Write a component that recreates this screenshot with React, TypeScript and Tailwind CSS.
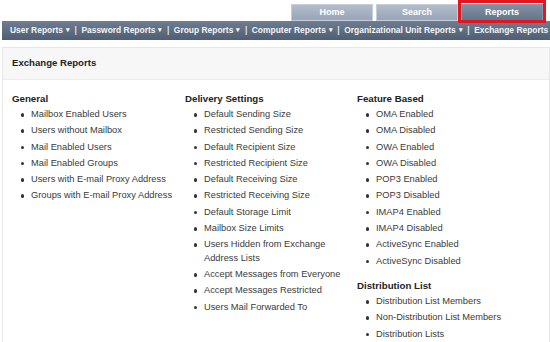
import React from 'react';

const navItems = [
  "User Reports",
  "Password Reports",
  "Group Reports",
  "Computer Reports",
  "Organizational Unit Reports",
  "Exchange Reports",
];

const columns = [
  [
    {
      title: "General",
      items: [
        "Mailbox Enabled Users",
        "Users without Mailbox",
        "Mail Enabled Users",
        "Mail Enabled Groups",
        "Users with E-mail Proxy Address",
        "Groups with E-mail Proxy Address",
      ],
    },
  ],
  [
    {
      title: "Delivery Settings",
      items: [
        "Default Sending Size",
        "Restricted Sending Size",
        "Default Recipient Size",
        "Restricted Recipient Size",
        "Default Receiving Size",
        "Restricted Receiving Size",
        "Default Storage Limit",
        "Mailbox Size Limits",
        "Users Hidden from Exchange Address Lists",
        "Accept Messages from Everyone",
        "Accept Messages Restricted",
        "Users Mail Forwarded To",
      ],
    },
  ],
  [
    {
      title: "Feature Based",
      items: [
        "OMA Enabled",
        "OMA Disabled",
        "OWA Enabled",
        "OWA Disabled",
        "POP3 Enabled",
        "POP3 Disabled",
        "IMAP4 Enabled",
        "IMAP4 Disabled",
        "ActiveSync Enabled",
        "ActiveSync Disabled",
      ],
    },
    {
      title: "Distribution List",
      items: [
        "Distribution List Members",
        "Non-Distribution List Members",
        "Distribution Lists",
      ],
    },
  ],
];

function Tab({ label, active }: { label: string; active?: boolean }) {
  return (
    <div className="relative">
      <div
        className={
          active
            ? "w-[82px] h-[17px] flex items-center justify-center text-[9px] font-bold text-white bg-gradient-to-b from-[#8190a4] to-[#65758b] border border-[#8a98ab]"
            : "w-[82px] h-[17px] flex items-center justify-center text-[9px] font-bold text-white bg-gradient-to-b from-[#b3bdcb] to-[#98a5b8] border border-[#c6ced9]"
        }
      >
        {label}
      </div>
      {active && (
        <div className="absolute left-[-3px] top-[-4px] w-[88px] h-[23px] border-[3px] border-[#e3161f]" />
      )}
    </div>
  );
}

export default function App() {
  return (
    <div className="w-[550px] h-[342px] bg-white overflow-hidden font-['Liberation_Sans',Arial,sans-serif]">
      <div className="flex justify-end items-end gap-[3px] pr-[7px] h-[21px]">
        <Tab label="Home" />
        <Tab label="Search" />
        <Tab label="Reports" active />
      </div>

      <div className="ml-[2px] h-[19px] flex items-center pl-[8px] whitespace-nowrap overflow-hidden bg-gradient-to-b from-[#6e7d92] to-[#4f5e73] text-[8.45px] font-bold text-[#f2f4f7]">
        {navItems.map((item, i) => (
          <div key={i} className="flex items-center shrink-0">
            {i > 0 && <span className="mx-[4.5px] text-[#dfe3ea]">|</span>}
            <span>{item}</span>
            {i < navItems.length - 1 && <span className="ml-[3px] text-[7px]">▾</span>}
          </div>
        ))}
      </div>

      <div className="mt-[7px] ml-[2px] border border-[#e7e7e7] h-[300px]">
        <div className="h-[32px] flex items-center pl-[9px] bg-[#f7f7f7] border-b border-[#ededed] text-[9.6px] font-bold text-[#222]">
          Exchange Reports
        </div>
        <div className="grid grid-cols-[173px_172px_1fr] pl-[9px] pt-[12px]">
          {columns.map((groups, ci) => (
            <div key={ci} className="flex flex-col gap-[11px]">
              {groups.map((g) => (
                <div key={g.title}>
                  <div className="text-[9.7px] leading-[13px] font-bold text-[#222]">{g.title}</div>
                  <ul className="mt-[3px] flex flex-col gap-[2.8px]">
                    {g.items.map((it) => (
                      <li key={it} className="flex text-[9.3px] leading-[13.5px] text-[#3a3a3a]">
                        <span className="w-[19px] shrink-0 flex justify-center pl-[2px] pt-[5px]">
                          <span className="w-[3.5px] h-[3.5px] rounded-full bg-[#333]" />
                        </span>
                        <span className="pr-[6px]">{it}</span>
                      </li>
                    ))}
                  </ul>
                </div>
              ))}
            </div>
          ))}
        </div>
      </div>
    </div>
  );
}
